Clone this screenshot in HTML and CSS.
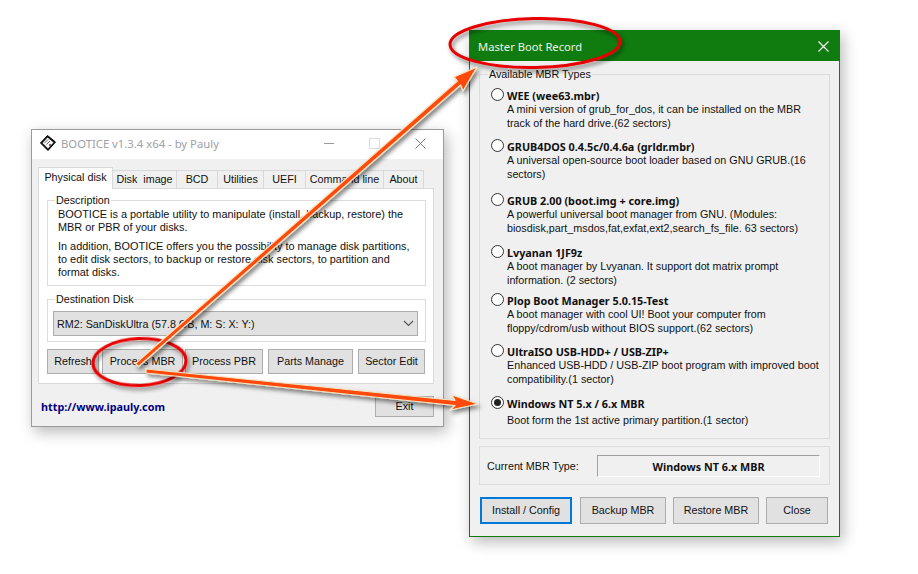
FILE: index.html
```html
<!DOCTYPE html>
<html lang="en">
<head>
  <meta charset="UTF-8">
  <title>BOOTICE - Master Boot Record</title>
  <link rel="stylesheet" href="styles.css">
</head>
<body>
  <div class="window main-win">
    <div class="titlebar">
      <svg class="app-icon" width="16" height="16" viewBox="0 0 16 16">
        <path d="M.5 8 7.500.500l8 6.500-7.500 8.500z" fill="#111" stroke="#000" stroke-linejoin="round"/>
        <path d="M2.500 8 7.500 2.500l6 5-5.500 6z" fill="#f4f4f4"/>
        <path d="M4.500 8 8 4.500M6.500 9.500 10 6" stroke="#666"/>
        <circle cx="10" cy="10" r="1" fill="#444"/>
      </svg>
      <span class="title-text">BOOTICE v1.3.4 x64 - by Pauly</span>
      <span class="win-ctrls">
        <span class="ctrl-min"></span>
        <span class="ctrl-max"></span>
        <svg width="11" height="11" viewBox="0 0 11 11"><path d="M.5.500l10 10M10.500.500l-10 10" stroke="#777" fill="none"/></svg>
      </span>
    </div>
    <div class="win-body">
      <div class="tabs">
        <div class="tab active">Physical disk</div>
        <div class="tab t-image">Disk&nbsp; image</div>
        <div class="tab t-bcd">BCD</div>
        <div class="tab t-util">Utilities</div>
        <div class="tab t-uefi">UEFI</div>
        <div class="tab t-cmd">Command line</div>
        <div class="tab t-about">About</div>
      </div>
      <div class="panel">
        <fieldset class="group desc-group">
          <legend>Description</legend>
          <p>BOOTICE is a portable utility to manipulate (install, backup, restore) the<br>MBR or PBR of your disks.</p>
          <p>In addition, BOOTICE offers you the possibility to manage disk partitions,<br>to edit disk sectors, to backup or restore disk sectors, to partition and<br>format disks.</p>
        </fieldset>
        <fieldset class="group dest-group">
          <legend>Destination Disk</legend>
          <div class="select">
            <span>RM2: SanDiskUltra (57.8 GB, M: S: X: Y:)</span>
            <svg width="11" height="7" viewBox="0 0 11 7"><path d="M1 1l4.500 4.500L10 1" stroke="#555" fill="none" stroke-width="1.200"/></svg>
          </div>
        </fieldset>
        <div class="btn-row">
          <div class="btn b-refresh">Refresh</div>
          <div class="btn b-mbr">Process MBR</div>
          <div class="btn b-pbr">Process PBR</div>
          <div class="btn b-parts">Parts Manage</div>
          <div class="btn b-sector">Sector Edit</div>
        </div>
      </div>
      <div class="main-foot">
        <span class="site-link">http://www.ipauly.com</span>
        <div class="btn b-exit">Exit</div>
      </div>
    </div>
  </div>

  <div class="window mbr-win">
    <div class="mbr-title">
      <span>Master Boot Record</span>
      <svg width="11" height="11" viewBox="0 0 11 11"><path d="M.5.500l10 10M10.500.500l-10 10" stroke="#fff" fill="none" stroke-width="1.100"/></svg>
    </div>
    <div class="mbr-body">
      <fieldset class="group types">
        <legend>Available MBR Types</legend>
        <div class="option">
          <span class="radio"></span>
          <div><h4>WEE (wee63.mbr)</h4><p>A mini version of grub_for_dos, it can be installed on the MBR<br>track of the hard drive.(62 sectors)</p></div>
        </div>
        <div class="option">
          <span class="radio"></span>
          <div><h4>GRUB4DOS 0.4.5c/0.4.6a (grldr.mbr)</h4><p>A universal open-source boot loader based on GNU GRUB.(16<br>sectors)</p></div>
        </div>
        <div class="option">
          <span class="radio"></span>
          <div><h4>GRUB 2.00 (boot.img + core.img)</h4><p>A powerful universal boot manager from GNU. (Modules:<br>biosdisk,part_msdos,fat,exfat,ext2,search_fs_file. 63 sectors)</p></div>
        </div>
        <div class="option">
          <span class="radio"></span>
          <div><h4>Lvyanan 1JF9z</h4><p>A boot manager by Lvyanan. It support dot matrix prompt<br>information. (2 sectors)</p></div>
        </div>
        <div class="option">
          <span class="radio"></span>
          <div><h4>Plop Boot Manager 5.0.15-Test</h4><p>A boot manager with cool UI! Boot your computer from<br>floppy/cdrom/usb without BIOS support.(62 sectors)</p></div>
        </div>
        <div class="option">
          <span class="radio"></span>
          <div><h4>UltraISO USB-HDD+ / USB-ZIP+</h4><p>Enhanced USB-HDD / USB-ZIP boot program with improved boot<br>compatibility.(1 sector)</p></div>
        </div>
        <div class="option">
          <span class="radio checked"></span>
          <div><h4>Windows NT 5.x / 6.x MBR</h4><p class="last-line">Boot form the 1st active primary partition.(1 sector)</p></div>
        </div>
      </fieldset>
      <div class="current">
        <span class="current-label">Current MBR Type:</span>
        <div class="current-field">Windows NT 6.x MBR</div>
      </div>
      <div class="mbr-btns">
        <div class="btn b-install">Install / Config</div>
        <div class="btn b-backup">Backup MBR</div>
        <div class="btn b-restore">Restore MBR</div>
        <div class="btn b-close">Close</div>
      </div>
    </div>
  </div>

  <!-- hand drawn annotations on top of the two windows -->
  <svg class="notes" width="918" height="574" viewBox="0 0 918 574">
    <defs>
      <filter id="soft" x="-10%" y="-10%" width="130%" height="130%">
        <feDropShadow dx="2" dy="3" stdDeviation="2" flood-color="#000" flood-opacity="0.5"/>
      </filter>
    </defs>
    <g fill="none" stroke="#e60000" stroke-width="3" filter="url(#soft)">
      <ellipse cx="535" cy="43" rx="85" ry="24.500" transform="rotate(-1 535 43)"/>
      <ellipse cx="139.500" cy="362" rx="46.500" ry="23.500" transform="rotate(-2 139.500 362)"/>
    </g>
    <g fill="#ff4a0a" stroke="#f3e6c4" stroke-width="1.200" stroke-linejoin="round" filter="url(#soft)">
      <path d="M135.500 363.500 457.400 81 454 77 477 67 463 91 460.600 85 138.500 366.500z"/>
      <path d="M146 369 455 400.500 452 395 478 404 450 410 455 405.500 146 373z"/>
    </g>
  </svg>
</body>
</html>
```
FILE: styles.css
```css
body {
  margin: 0;
  width: 918px;
  height: 574px;
  position: relative;
  overflow: hidden;
  background: #fff;
  font-family: "Liberation Sans", sans-serif;
  font-size: 10.750px;
  color: #111;
}
.window {
  position: absolute;
  box-sizing: border-box;
  background: #f0f0f0;
  box-shadow: 3px 5px 14px rgba(0, 0, 0, 0.28);
}
.main-win {
  left: 31px;
  top: 129px;
  width: 413px;
  height: 298px;
  border: 1px solid #9a9a9a;
}
.titlebar {
  box-sizing: border-box;
  height: 29px;
  background: #fff;
  display: flex;
  align-items: center;
  padding: 0 17px 3px 8px;
}
.app-icon {
  margin-right: 5px;
}
.title-text {
  flex: 1;
  color: #a0a0a8;
  font-family: "Noto Sans", sans-serif;
  font-size: 11.300px;
}
.win-ctrls {
  display: flex;
  align-items: center;
}
.ctrl-min {
  width: 10px;
  height: 1px;
  background: #999;
  margin-right: 35px;
}
.ctrl-max {
  width: 9px;
  height: 9px;
  border: 1px solid #ddd;
  margin-right: 35px;
}
.win-body {
  padding: 8px 9px 0 6px;
}
.tabs {
  display: flex;
  align-items: flex-end;
  height: 21px;
}
.tab {
  box-sizing: border-box;
  height: 18px;
  line-height: 17px;
  text-align: center;
  background: #f0f0f0;
  border: 1px solid #d9d9d9;
  border-bottom: 0;
  margin-left: -1px;
  white-space: nowrap;
}
.tab.active {
  width: 75px;
  height: 22px;
  line-height: 18px;
  margin-left: 0;
  background: #fff;
  position: relative;
  top: 1px;
}
.t-image { width: 65px; }
.t-bcd { width: 42px; }
.t-util { width: 47px; }
.t-uefi { width: 43px; }
.t-cmd { width: 79px; }
.t-about { width: 41px; }
.panel {
  box-sizing: border-box;
  height: 196px;
  background: #fff;
  border: 1px solid #d9d9d9;
  padding: 5px 7px 0 8px;
}
.group {
  margin: 0;
  min-width: 0;
  border: 1px solid #dcdcdc;
  padding: 0;
}
.group legend {
  margin-left: 7px;
  padding: 0 1px;
  line-height: 13px;
}
.group p {
  margin: 0;
  white-space: nowrap;
}
.desc-group {
  height: 89px;
  padding: 1px 0 0 10px;
  line-height: 13px;
}
.desc-group p {
  font-size: 10.900px;
}
.desc-group legend {
  margin-left: -3px;
}
.desc-group p + p {
  margin-top: 6px;
}
.dest-group {
  height: 42px;
  margin-top: 7px;
  padding: 5px 7px 0 5px;
}
.dest-group legend {
  margin-left: 2px;
}
.select {
  box-sizing: border-box;
  height: 25px;
  background: #e1e1e1;
  border: 1px solid #adadad;
  display: flex;
  align-items: center;
  justify-content: space-between;
  padding: 0 3px 0 3px;
}
.btn {
  box-sizing: border-box;
  height: 26px;
  line-height: 24px;
  text-align: center;
  background: #e1e1e1;
  border: 1px solid #adadad;
  white-space: nowrap;
}
.btn-row {
  display: flex;
  margin-top: 7px;
}
.btn-row .btn {
  height: 25px;
  line-height: 23px;
}
.b-refresh { width: 52px; }
.b-mbr { width: 81px; margin-left: 3px; }
.b-pbr { width: 78px; margin-left: 2px; }
.b-parts { width: 85px; margin-left: 5px; }
.b-sector { width: 67px; margin-left: 5px; }
.main-foot {
  display: flex;
  align-items: center;
  justify-content: space-between;
  padding: 12px 0 0 3px;
}
.site-link {
  color: #000080;
  font-family: "Noto Sans", sans-serif;
  font-weight: bold;
  font-size: 10.800px;
}
.b-exit {
  width: 59px;
  height: 21px;
  line-height: 19px;
}

.mbr-win {
  left: 469px;
  top: 30px;
  width: 371px;
  height: 507px;
  border: 1px solid #107c10;
}
.mbr-title {
  height: 30px;
  background: #107c10;
  color: #e8f4e8;
  font-family: "Noto Sans", sans-serif;
  font-size: 11.200px;
  display: flex;
  align-items: center;
  justify-content: space-between;
  padding: 0 10px 0 8px;
}
.mbr-body {
  padding: 7px 9px 0 9px;
}
.types {
  height: 369px;
  padding: 0 0 0 11px;
}
.types legend {
  margin-left: -3px;
}
.option {
  display: flex;
  gap: 3px;
  line-height: 13.500px;
}
.option h4 {
  margin: 0;
  font-family: "Noto Sans", sans-serif;
  font-size: 10.800px;
  line-height: 15px;
}
.option .last-line {
  margin-top: 3px;
}
.option:nth-child(2) { margin-top: 7px; }
.option:nth-child(3) { margin-top: 9px; }
.option:nth-child(4) { margin-top: 12px; }
.option:nth-child(5) { margin-top: 10px; }
.option:nth-child(6) { margin-top: 6px; }
.option:nth-child(7) { margin-top: 9px; }
.option:nth-child(8) { margin-top: 10px; }
.radio {
  box-sizing: border-box;
  flex: none;
  width: 13px;
  height: 13px;
  border: 1px solid #333;
  border-radius: 50%;
  background: #fff;
  display: flex;
  align-items: center;
  justify-content: center;
}
.radio.checked::after {
  content: "";
  width: 7px;
  height: 7px;
  border-radius: 50%;
  background: #222;
}
.current {
  box-sizing: border-box;
  height: 39px;
  margin-top: 7px;
  border: 1px solid #dcdcdc;
  display: flex;
  align-items: center;
  padding: 0 9px 0 7px;
}
.current-label {
  width: 110px;
}
.current-field {
  box-sizing: border-box;
  flex: 1;
  height: 22px;
  line-height: 21px;
  text-align: center;
  font-family: "Noto Sans", sans-serif;
  font-weight: bold;
  font-size: 10.800px;
  background: #f0f0f0;
  border: 1px solid #a0a0a0;
  border-right-color: #fff;
  border-bottom-color: #fff;
}
.mbr-btns {
  display: flex;
  margin-top: 12px;
  padding-left: 1px;
}
.b-install {
  width: 92px;
  height: 27px;
  line-height: 23px;
  border: 2px solid #0078d7;
}
.b-backup { width: 86px; height: 27px; line-height: 25px; margin-left: 8px; }
.b-restore { width: 86px; height: 27px; line-height: 25px; margin-left: 7px; }
.b-close { width: 62px; height: 27px; line-height: 25px; margin-left: 7px; }

.notes {
  position: absolute;
  left: 0;
  top: 0;
}
```
